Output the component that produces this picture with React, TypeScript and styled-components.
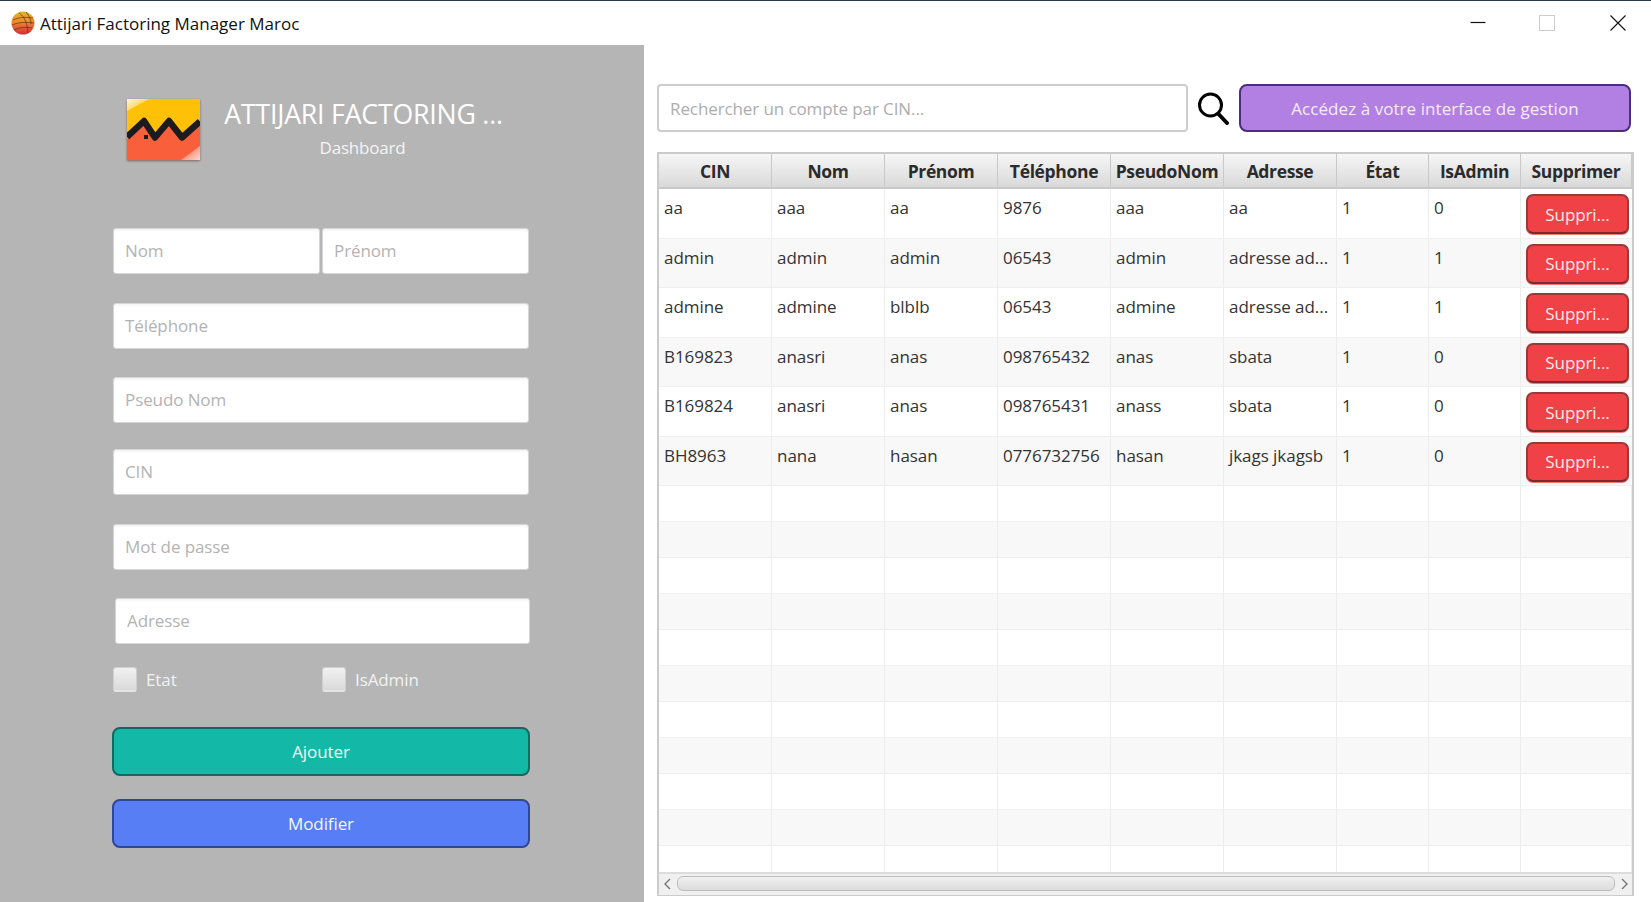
import React from "react";
import styled, { createGlobalStyle } from "styled-components";

const FONT = `"Open Sans", "Noto Sans", "Liberation Sans", sans-serif`;

const Global = createGlobalStyle`
  html, body { margin: 0; padding: 0; background: #fff; }
  body { font-family: ${FONT}; overflow: hidden; }
  * { box-sizing: border-box; }
`;

const Win = styled.div`
  width: 1651px;
  height: 902px;
  display: flex;
  flex-direction: column;
  border-top: 1px solid #26384a;
  overflow: hidden;
`;
const TitleBar = styled.header`
  height: 44px;
  flex: none;
  display: flex;
  align-items: center;
  padding: 0 0 0 11px;
  background: #fff;
`;
const TitleText = styled.span`
  margin-left: 5px;
  font-size: 17px;
  letter-spacing: 0;
  color: #111;
`;
const Controls = styled.div`
  margin-left: auto;
  display: flex;
  align-items: center;
  gap: 53px;
  padding-right: 25px;
  margin-top: -1px;
  svg:last-child { margin-left: 2px; }
`;
const Main = styled.div`
  flex: 1;
  display: flex;
  min-height: 0;
`;
const Left = styled.aside`
  width: 644px;
  flex: none;
  background: #b5b5b5;
  display: flex;
  flex-direction: column;
  padding: 54px 0 0 113px;
`;
const Brand = styled.div`
  display: flex;
  align-items: flex-start;
  margin-left: 14px;
  height: 61px;
`;
const BrandText = styled.div`
  margin-left: 24px;
  width: 279px;
  display: flex;
  flex-direction: column;
  align-items: center;
  margin-top: -2px;
`;
const BrandTitle = styled.div`
  font-size: 26.7px;
  line-height: 34px;
  letter-spacing: -0.2px;
  color: #fff;
  white-space: nowrap;
`;
const BrandSub = styled.div`
  font-size: 17px;
  line-height: 24px;
  margin-top: 5px;
  margin-left: -2px;
  letter-spacing: -0.2px;
  color: #f4f4f4;
`;
const Row = styled.div<{ $mt: number }>`
  display: flex;
  gap: 2px;
  margin-top: ${(p) => p.$mt}px;
`;
const Field = styled.input<{ $w?: number; $ml?: number }>`
  width: ${(p) => p.$w ?? 416}px;
  margin-left: ${(p) => p.$ml ?? 0}px;
  height: 46px;
  border: 1px solid #d6d6d6;
  border-radius: 3px;
  background: #fff;
  padding: 0 11px 2px;
  font-family: ${FONT};
  font-size: 17px;
  letter-spacing: -0.1px;
  outline: none;
  box-shadow: inset 0 2px 2px rgba(0, 0, 0, 0.04);
  &::placeholder { color: #b3b3b3; opacity: 1; }
`;
const Checks = styled.div`
  display: flex;
  margin-top: 23px;
`;
const CheckItem = styled.label`
  width: 209px;
  display: flex;
  align-items: center;
  gap: 9px;
  font-size: 17px;
  letter-spacing: -0.1px;
  color: #f2f2f2;
`;
const CheckBox = styled.span`
  width: 24px;
  height: 25px;
  border-radius: 3px;
  border: 1px solid #cfcfcf;
  border-bottom: 2px solid #e4e4e4;
  background: linear-gradient(#f1f1f1, #d9d9d9);
`;
const ActionBtn = styled.button<{ $bg: string; $bd: string; $mt: number }>`
  width: 418px;
  height: 49px;
  margin-top: ${(p) => p.$mt}px;
  margin-left: -1px;
  border: 2px solid ${(p) => p.$bd};
  border-radius: 8px;
  background: ${(p) => p.$bg};
  color: #f4f8f8;
  font-family: ${FONT};
  font-size: 17px;
  letter-spacing: -0.1px;
`;
const Right = styled.section`
  flex: 1;
  min-width: 0;
  display: flex;
  flex-direction: column;
  padding: 39px 17px 6px 13px;
`;
const Toolbar = styled.div`
  display: flex;
  align-items: center;
  height: 48px;
`;
const Search = styled.input`
  width: 531px;
  height: 48px;
  border: 2px solid #cdcdcd;
  border-radius: 4px;
  background: #fff;
  padding: 0 11px;
  font-family: ${FONT};
  font-size: 17px;
  letter-spacing: -0.1px;
  outline: none;
  &::placeholder { color: #adadad; opacity: 1; }
`;
const SearchIcon = styled.svg`
  width: 32px;
  height: 34px;
  margin-left: 9px;
  flex: none;
`;
const GoBtn = styled.button`
  width: 392px;
  height: 48px;
  margin-left: 10px;
  border: 2px solid #4a2f80;
  border-radius: 8px;
  background: #b27fe2;
  color: #f4edfb;
  font-family: ${FONT};
  font-size: 17px;
  letter-spacing: 0.06px;
`;
const Table = styled.div`
  margin-top: 20px;
  width: 977px;
  flex: 1;
  min-height: 0;
  border: 2px solid #cbcbcb;
  border-top-width: 1px;
  border-bottom-width: 1px;
  display: flex;
  flex-direction: column;
  overflow: hidden;
  background: #fff;
`;
const COLS = "113px 113px 113px 113px 113px 113px 92px 92px 1fr";
const HeadRow = styled.div`
  flex: none;
  height: 36px;
  display: grid;
  grid-template-columns: ${COLS};
  border-bottom: 2px solid #c8c8c8;
  border-top: 1px solid #cbcbcb;
  background: linear-gradient(#f6f6f6, #d9d9d9);
`;
const HeadCell = styled.div`
  display: flex;
  align-items: center;
  justify-content: center;
  font-size: 17.5px;
  font-weight: 700;
  letter-spacing: -0.35px;
  color: #2b2b2b;
  white-space: nowrap;
  border-right: 1px solid #c9c9c9;
`;
const Body = styled.div`
  flex: 1;
  min-height: 0;
  overflow: hidden;
`;
const DataRow = styled.div<{ $odd: boolean; $h: number }>`
  height: ${(p) => p.$h}px;
  display: grid;
  grid-template-columns: ${COLS};
  background: ${(p) => (p.$odd ? "#f8f8f8" : "#fff")};
  border-bottom: 1px solid #efefef;
`;
const Cell = styled.div`
  padding: 7px 0 0 5px;
  font-size: 17px;
  letter-spacing: -0.05px;
  line-height: 24px;
  color: #333;
  white-space: nowrap;
  overflow: hidden;
  border-right: 1px solid #ededed;
`;
const BtnCell = styled.div`
  padding: 5px 5px 0 5px;
`;
const DeleteBtn = styled.button`
  width: 103px;
  height: 40px;
  padding: 0;
  border: 2px solid #963a3a;
  border-bottom-color: #7a2c2c;
  border-radius: 7px;
  background: #ef4146;
  color: #fbeaea;
  font-family: ${FONT};
  font-size: 17px;
  letter-spacing: -0.1px;
  box-shadow: 0 1px 0 #e77;
`;
const ScrollBar = styled.div`
  flex: none;
  height: 23px;
  display: flex;
  align-items: center;
  padding-bottom: 2px;
  background: #f0f0f0;
  border-top: 2px solid #dcdcdc;
`;
const ScrollThumb = styled.div`
  flex: 1;
  height: 15px;
  border: 1px solid #bdbdbd;
  border-radius: 6px;
  background: linear-gradient(#f0f0f0, #dcdcdc);
`;
const ScrollArrow = styled.svg<{ $w: number }>`
  width: ${(p) => p.$w}px;
  height: 12px;
  flex: none;
`;
const LogoSvg = styled.svg`
  filter: drop-shadow(0 1px 1px rgba(90, 50, 30, 0.6));
`;

type Rec = [string, string, string, string, string, string, string, string];
const rows: Rec[] = [
  ["aa", "aaa", "aa", "9876", "aaa", "aa", "1", "0"],
  ["admin", "admin", "admin", "06543", "admin", "adresse ad...", "1", "1"],
  ["admine", "admine", "blblb", "06543", "admine", "adresse ad...", "1", "1"],
  ["B169823", "anasri", "anas", "098765432", "anas", "sbata", "1", "0"],
  ["B169824", "anasri", "anas", "098765431", "anass", "sbata", "1", "0"],
  ["BH8963", "nana", "hasan", "0776732756", "hasan", "jkags jkagsb", "1", "0"],
];
const heads = ["CIN", "Nom", "Prénom", "Téléphone", "PseudoNom", "Adresse", "État", "IsAdmin", "Supprimer"];

const GlobeIcon = () => (
  <svg width="24" height="24" viewBox="0 0 24 24">
    <defs>
      <linearGradient id="gl" x1="0" y1="0" x2="0" y2="1">
        <stop offset="0" stopColor="#d9b92a" />
        <stop offset="0.45" stopColor="#ee8a2c" />
        <stop offset="1" stopColor="#d22c3a" />
      </linearGradient>
    </defs>
    <circle cx="12" cy="12" r="11.5" fill="url(#gl)" />
    <path d="M2 9c6-3 13-3 20-2M1 14c7-3 14-3 22-2M3 19c6-3 12-3 18-2M8 2c3 2 8 6 9 20M15 1c2 3 5 6 5 12" fill="none" stroke="#5a2a20" strokeWidth="0.9" opacity="0.75" />
  </svg>
);

const BrandLogo = () => (
  <LogoSvg width="73" height="61" viewBox="0 0 73 61">
    <defs>
      <linearGradient id="sh1" x1="0" y1="0" x2="1" y2="1">
        <stop offset="0" stopColor="#fff" stopOpacity="0.85" />
        <stop offset="1" stopColor="#fff" stopOpacity="0" />
      </linearGradient>
      <linearGradient id="sh2" x1="1" y1="1" x2="0" y2="0">
        <stop offset="0" stopColor="#fff" stopOpacity="0.75" />
        <stop offset="1" stopColor="#fff" stopOpacity="0" />
      </linearGradient>
    </defs>
    <rect width="73" height="61" fill="#ffc107" />
    <path d="M0 40L17 24 28 42 42 24 55 42 73 25V61H0Z" fill="#fa5f3c" />
    <path d="M0 38L17 22 28 38.5 42 22 55 38.5 73 22.5" fill="none" stroke="#1c1c1e" strokeWidth="6.5" strokeLinejoin="round" />
    <rect x="17" y="36" width="4" height="4" fill="#1c1c1e" />
    <path d="M0 0H22L0 12Z" fill="url(#sh1)" />
    <path d="M73 61H54L73 47Z" fill="url(#sh2)" />
  </LogoSvg>
);

export default function App() {
  return (
    <Win>
      <Global />
      <TitleBar>
        <GlobeIcon />
        <TitleText>Attijari Factoring Manager Maroc</TitleText>
        <Controls>
          <svg width="16" height="16" viewBox="0 0 16 16"><path d="M0.5 7.5H15.5" stroke="#111" strokeWidth="1.2" /></svg>
          <svg width="16" height="16" viewBox="0 0 16 16"><rect x="0.5" y="0.5" width="15" height="15" fill="none" stroke="#ccc" /></svg>
          <svg width="16" height="16" viewBox="0 0 16 16"><path d="M0.5 0.5L15.5 15.5M15.5 0.5L0.5 15.5" stroke="#111" strokeWidth="1.1" /></svg>
        </Controls>
      </TitleBar>
      <Main>
        <Left>
          <Brand>
            <BrandLogo />
            <BrandText>
              <BrandTitle>ATTIJARI FACTORING ...</BrandTitle>
              <BrandSub>Dashboard</BrandSub>
            </BrandText>
          </Brand>
          <Row $mt={68}>
            <Field $w={207} placeholder="Nom" />
            <Field $w={207} placeholder="Prénom" />
          </Row>
          <Row $mt={29}><Field placeholder="Téléphone" /></Row>
          <Row $mt={28}><Field placeholder="Pseudo Nom" /></Row>
          <Row $mt={26}><Field placeholder="CIN" /></Row>
          <Row $mt={29}><Field placeholder="Mot de passe" /></Row>
          <Row $mt={28}><Field $w={415} $ml={2} placeholder="Adresse" /></Row>
          <Checks>
            <CheckItem><CheckBox />Etat</CheckItem>
            <CheckItem><CheckBox />IsAdmin</CheckItem>
          </Checks>
          <ActionBtn $mt={35} $bg="#14b8a6" $bd="#0e6a62">Ajouter</ActionBtn>
          <ActionBtn $mt={23} $bg="#577ef4" $bd="#304796">Modifier</ActionBtn>
        </Left>
        <Right>
          <Toolbar>
            <Search placeholder="Rechercher un compte par CIN..." />
            <SearchIcon viewBox="0 0 32 34">
              <circle cx="13.5" cy="14" r="11" fill="none" stroke="#000" strokeWidth="3" />
              <path d="M21.5 23L30 32" stroke="#000" strokeWidth="4" strokeLinecap="round" />
            </SearchIcon>
            <GoBtn>Accédez à votre interface de gestion</GoBtn>
          </Toolbar>
          <Table>
            <HeadRow>
              {heads.map((h) => <HeadCell key={h}>{h}</HeadCell>)}
            </HeadRow>
            <Body>
              {rows.map((r, i) => (
                <DataRow key={r[0]} $odd={i % 2 === 1} $h={49.5}>
                  {r.map((c, j) => <Cell key={j}>{c}</Cell>)}
                  <BtnCell><DeleteBtn>Suppri...</DeleteBtn></BtnCell>
                </DataRow>
              ))}
              {Array.from({ length: 11 }, (_, i) => (
                <DataRow key={i} $odd={i % 2 === 1} $h={36}>
                  {Array.from({ length: 9 }, (_, j) => <Cell key={j} />)}
                </DataRow>
              ))}
            </Body>
            <ScrollBar>
              <ScrollArrow $w={18} viewBox="0 0 18 12"><path d="M11 1L6 6L11 11" fill="none" stroke="#777" strokeWidth="1.4" /></ScrollArrow>
              <ScrollThumb />
              <ScrollArrow $w={17} viewBox="0 0 17 12"><path d="M7 1L12 6L7 11" fill="none" stroke="#777" strokeWidth="1.4" /></ScrollArrow>
            </ScrollBar>
          </Table>
        </Right>
      </Main>
    </Win>
  );
}
